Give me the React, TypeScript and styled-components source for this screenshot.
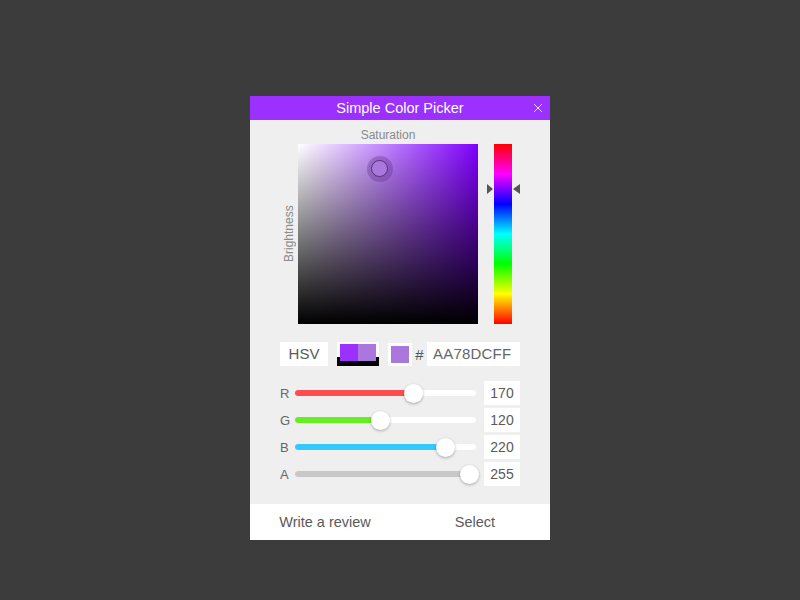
import styled, { createGlobalStyle } from 'styled-components';
import { X } from 'lucide-react';

const GlobalStyle = createGlobalStyle`
  body {
    margin: 0;
    background: #3c3c3c;
    font-family: 'Liberation Sans', Arial, sans-serif;
  }
`;

const Page = styled.div`
  display: flex;
  align-items: flex-start;
  justify-content: center;
  padding-top: 96px;
`;

const Panel = styled.div`
  width: 300px;
  background: #efefef;
  display: flex;
  flex-direction: column;
`;

const Header = styled.div`
  display: grid;
  grid-template-columns: 24px 1fr 24px;
  align-items: center;
  height: 24px;
  background: #9b30ff;
  color: #fff;
  font-size: 14.5px;
  text-align: center;
`;

const Close = styled.button`
  display: flex;
  align-items: center;
  justify-content: center;
  padding: 0;
  border: none;
  background: none;
  color: #fff;
  cursor: pointer;
`;

const Body = styled.div`
  padding: 8px 30px 18px;
`;

const AxisLabel = styled.div`
  font-size: 12px;
  line-height: 14px;
  color: #8a8a8a;
`;

const SatLabel = styled(AxisLabel)`
  margin: 0 0 2px 18px;
  width: 180px;
  text-align: center;
`;

const PickerRow = styled.div`
  display: flex;
  height: 180px;
`;

const BrightLabel = styled(AxisLabel)`
  width: 18px;
  display: flex;
  align-items: center;
  justify-content: center;
  writing-mode: vertical-rl;
  transform: rotate(180deg);
`;

const SvSquare = styled.div<{ $hue: number }>`
  position: relative;
  width: 180px;
  height: 180px;
  background:
    linear-gradient(to bottom, rgba(0, 0, 0, 0), #000),
    linear-gradient(to right, #fff, hsl(${({ $hue }) => $hue}, 100%, 50%));
`;

const Cursor = styled.div`
  position: absolute;
  width: 26px;
  height: 26px;
  margin: -13px 0 0 -13px;
  border-radius: 50%;
  background: rgba(95, 45, 140, 0.35);
  display: flex;
  align-items: center;
  justify-content: center;
`;

const CursorDot = styled.div<{ $color: string }>`
  width: 15px;
  height: 15px;
  border-radius: 50%;
  background: ${({ $color }) => $color};
  border: 1px solid #55307a;
`;

const HueWrap = styled.div`
  position: relative;
  margin-left: 16px;
  width: 18px;
`;

const HueBar = styled.div`
  width: 18px;
  height: 180px;
  background: linear-gradient(
    to bottom,
    #f00,
    #f0f 16.6%,
    #00f 33.3%,
    #0ff 50%,
    #0f0 66.6%,
    #ff0 83.3%,
    #f00
  );
`;

const Arrow = styled.div<{ $side: 'left' | 'right' }>`
  position: absolute;
  width: 0;
  height: 0;
  margin-top: -5px;
  border-top: 5px solid transparent;
  border-bottom: 5px solid transparent;
  ${({ $side }) =>
    $side === 'left'
      ? 'left: -7px; border-left: 6px solid #555;'
      : 'right: -8px; border-right: 7px solid #555;'}
`;

const Controls = styled.div`
  display: flex;
  align-items: center;
  margin-top: 18px;
  height: 24px;
`;

const Field = styled.div<{ $width: number }>`
  width: ${({ $width }) => $width}px;
  height: 24px;
  background: #fff;
  color: #5a5a5a;
  font-size: 15px;
  line-height: 24px;
  box-sizing: border-box;
`;

const ModeField = styled(Field)`
  text-align: center;
`;

const HexField = styled(Field)`
  padding-left: 6px;
  color: #666;
  letter-spacing: 0.2px;
`;

const Compare = styled.div`
  display: flex;
  margin-left: 9px;
  padding: 2px 3px 5px;
  background: linear-gradient(to bottom, #fff 0 62%, #000 62%);
`;

const Swatch = styled.div<{ $color: string }>`
  width: 18px;
  height: 17px;
  background: ${({ $color }) => $color};
`;

const SwatchBox = styled.div`
  margin-left: 9px;
  padding: 3px;
  background: #fff;
`;

const Hash = styled.span`
  width: 15px;
  text-align: center;
  color: #555;
  font-size: 15px;
`;

const Sliders = styled.div`
  display: flex;
  flex-direction: column;
  gap: 3px;
  margin-top: 15px;
`;

const SliderRow = styled.div`
  display: flex;
  align-items: center;
  height: 24px;
`;

const ChannelLabel = styled.span`
  width: 15px;
  font-size: 13px;
  color: #666;
`;

const Track = styled.div`
  position: relative;
  width: 181px;
  height: 6px;
  border-radius: 3px;
  background: #fff;
`;

const Fill = styled.div<{ $color: string }>`
  height: 100%;
  border-radius: 3px;
  background: ${({ $color }) => $color};
`;

const Thumb = styled.div`
  position: absolute;
  top: 50%;
  width: 19px;
  height: 19px;
  margin: -9.5px 0 0 -9.5px;
  border-radius: 50%;
  background: #fff;
  box-shadow: 0 1px 3px rgba(0, 0, 0, 0.3);
`;

const ValueBox = styled(Field)`
  margin-left: auto;
  text-align: center;
  font-size: 14px;
`;

const Footer = styled.div`
  display: flex;
  height: 36px;
  background: #fff;
`;

const FooterButton = styled.button`
  flex: 1;
  border: none;
  background: none;
  color: #5a5a5a;
  font-family: inherit;
  font-size: 14.5px;
  cursor: pointer;
`;

const channels = [
  { name: 'R', value: 170, color: '#ff4d4d' },
  { name: 'G', value: 120, color: '#66ee22' },
  { name: 'B', value: 220, color: '#33c8ff' },
  { name: 'A', value: 255, color: '#c8c8c8' },
];

const App = () => {
  const hue = 270;
  const sat = 0.4545;
  const val = 220 / 255;
  const current = '#aa78dc';

  return (
    <>
      <GlobalStyle />
      <Page>
        <Panel>
          <Header>
            <span />
            <span>Simple Color Picker</span>
            <Close>
              <X size={14} strokeWidth={1.5} />
            </Close>
          </Header>
          <Body>
            <SatLabel>Saturation</SatLabel>
            <PickerRow>
              <BrightLabel>Brightness</BrightLabel>
              <SvSquare $hue={hue}>
                <Cursor style={{ left: `${sat * 100}%`, top: `${(1 - val) * 100}%` }}>
                  <CursorDot $color={current} />
                </Cursor>
              </SvSquare>
              <HueWrap>
                <HueBar />
                <Arrow $side="left" style={{ top: `${(1 - hue / 360) * 100}%` }} />
                <Arrow $side="right" style={{ top: `${(1 - hue / 360) * 100}%` }} />
              </HueWrap>
            </PickerRow>
            <Controls>
              <ModeField $width={48}>HSV</ModeField>
              <Compare>
                <Swatch $color="#9b30ff" />
                <Swatch $color={current} />
              </Compare>
              <SwatchBox>
                <Swatch $color={current} />
              </SwatchBox>
              <Hash>#</Hash>
              <HexField $width={93}>AA78DCFF</HexField>
            </Controls>
            <Sliders>
              {channels.map((c) => {
                const pos = 6 + (c.value / 255) * 168;
                return (
                  <SliderRow key={c.name}>
                    <ChannelLabel>{c.name}</ChannelLabel>
                    <Track>
                      <Fill $color={c.color} style={{ width: pos }} />
                      <Thumb style={{ left: pos }} />
                    </Track>
                    <ValueBox $width={36}>{c.value}</ValueBox>
                  </SliderRow>
                );
              })}
            </Sliders>
          </Body>
          <Footer>
            <FooterButton>Write a review</FooterButton>
            <FooterButton>Select</FooterButton>
          </Footer>
        </Panel>
      </Page>
    </>
  );
};

export default App;
